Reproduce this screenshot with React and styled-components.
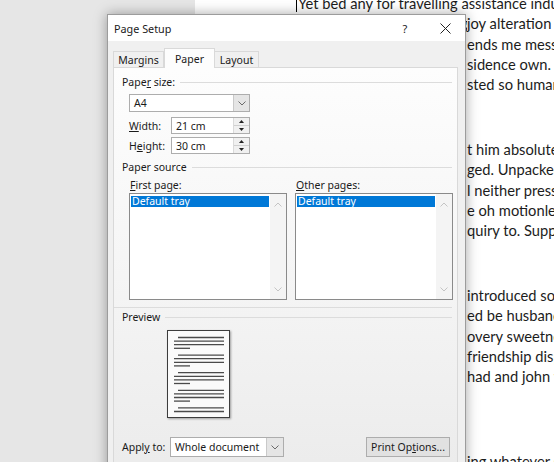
import React from 'react';
import styled, { createGlobalStyle } from 'styled-components';

const GlobalStyle = createGlobalStyle`
  html, body {
    margin: 0;
    padding: 0;
  }
  body {
    width: 554px;
    height: 462px;
    overflow: hidden;
    background: #e6e6e6;
  }
`;

const Desktop = styled.div`
  position: relative;
  width: 554px;
  height: 462px;
  overflow: hidden;
  display: flex;
  background: #e6e6e6;
`;

/* ---- document behind the dialog ---- */
const DocPage = styled.div`
  margin-left: 195px;
  flex: 1;
  background: #fff;
  padding-left: 101px;
  font-family: Lato, 'Open Sans', sans-serif;
  font-size: 14.7px;
  color: #1c1c1c;
  overflow: hidden;
`;
const Paragraph = styled.div`
  margin-bottom: 44.5px;
  &:first-child {
    margin-top: -7px;
  }
`;
const DocLine = styled.div`
  height: 20.3px;
  line-height: 20.3px;
  white-space: nowrap;
`;
// the part of a line that lies under the dialog
const Behind = styled.span`
  display: inline-block;
  width: 171px;
  overflow: hidden;
  vertical-align: top;
`;
const Caret = styled.span`
  display: inline-block;
  width: 1px;
  height: 15px;
  margin-right: 1px;
  background: #000;
  vertical-align: -3px;
`;

/* ---- dialog window ---- */
const Dialog = styled.div`
  position: absolute;
  left: 107px;
  top: 14px;
  width: 359px;
  height: 470px;
  box-sizing: border-box;
  background: #f0f0f0;
  border: 1px solid #9c9c9c;
  box-shadow: 0 0 12px rgba(0, 0, 0, 0.35);
  font-family: 'Noto Sans', 'Open Sans', sans-serif;
  font-size: 10.5px;
  color: #1a1a1a;
  display: flex;
  flex-direction: column;
`;
const TitleBar = styled.div`
  height: 26px;
  background: #fff;
  display: flex;
  align-items: center;
  padding-left: 6px;
  font-size: 10.8px;
`;
const Title = styled.div`
  flex: 1;
`;
const CaptionButton = styled.div`
  width: 40px;
  height: 26px;
  display: flex;
  align-items: center;
  justify-content: center;
  font-size: 11px;
`;

const TabStrip = styled.div`
  display: flex;
  align-items: flex-end;
  padding-top: 6px;
  margin-left: 5px;
  height: 20px;
`;
const Tab = styled.div`
  box-sizing: border-box;
  width: ${p => p.$w}px;
  height: ${p => (p.$active ? 20 : 17)}px;
  display: flex;
  align-items: center;
  justify-content: center;
  border: 1px solid #d9d9d9;
  border-bottom: ${p => (p.$active ? 'none' : '1px solid #d9d9d9')};
  border-left: ${p => (p.$first || p.$active ? '1px solid #d9d9d9' : 'none')};
  background: ${p => (p.$active ? '#fdfdfd' : '#f0f0f0')};
  position: relative;
  z-index: ${p => (p.$active ? 2 : 1)};
  margin-bottom: -1px;
  padding-top: ${p => (p.$active ? 0 : 1)}px;
`;

const Panel = styled.div`
  flex: 1;
  margin: 0 7px 0 5px;
  border: 1px solid #d9d9d9;
  background: linear-gradient(#fdfdfd, #f6f6f6 45%, #ebebeb);
  padding: 0 5px 0 8px;
  display: flex;
  flex-direction: column;
`;

const GroupHeader = styled.div`
  display: flex;
  align-items: center;
  gap: 5px;
  height: 14px;
  margin-top: ${p => p.$top}px;
  &::after {
    content: '';
    flex: 1;
    height: 1px;
    background: #dcdcdc;
  }
`;
const U = styled.span`
  text-decoration: underline;
  text-underline-offset: 1px;
`;

const SizeBlock = styled.div`
  margin-left: 7px;
  margin-top: 5px;
  display: flex;
  flex-direction: column;
`;
const Select = styled.div`
  box-sizing: border-box;
  display: flex;
  width: ${p => p.$w}px;
  height: ${p => p.$h}px;
  border: 1px solid #adadad;
  background: #fff;
`;
const Value = styled.div`
  flex: 1;
  display: flex;
  align-items: center;
  padding-left: 4px;
`;
const DropButton = styled.div`
  width: ${p => p.$w || 15}px;
  background: #e5e5e5;
  border-left: 1px solid #c9c9c9;
  display: flex;
  align-items: center;
  justify-content: center;
`;
const FieldRow = styled.div`
  display: flex;
  align-items: center;
  margin-top: ${p => p.$top}px;
`;
const FieldLabel = styled.div`
  width: 42px;
`;
const Spinner = styled.div`
  width: 15px;
  background: #f0f0f0;
  border-left: 1px solid #dadada;
  display: flex;
  flex-direction: column;
`;
const SpinHalf = styled.div`
  flex: 1;
  display: flex;
  align-items: center;
  justify-content: center;
  & + & {
    border-top: 1px solid #d0d0d0;
  }
`;

const Columns = styled.div`
  display: grid;
  grid-template-columns: 158px 158px;
  column-gap: 8px;
  margin: 4px 0 0 7px;
`;
const ColLabel = styled.div`
  height: 14px;
  display: flex;
  align-items: center;
  padding-left: 1px;
  margin-bottom: 1px;
`;
const ListBox = styled.div`
  box-sizing: border-box;
  height: 107px;
  border: 1px solid #8a8a8a;
  background: #fff;
  display: flex;
`;
const ListItems = styled.div`
  flex: 1;
  padding: 2px 1px 0 1px;
`;
const ListItem = styled.div`
  height: 11px;
  line-height: 11px;
  background: #0078d7;
  color: #fff;
  padding-left: 1px;
`;
const ScrollTrack = styled.div`
  width: 16px;
  background: #f4f4f4;
  display: flex;
  flex-direction: column;
  justify-content: space-between;
  align-items: center;
  padding: 8px 0 7px;
`;

const Separator = styled.div`
  height: 1px;
  background: #dcdcdc;
  margin: 7px 0 0 -8px;
`;

const PreviewPage = styled.div`
  box-sizing: border-box;
  width: 63px;
  height: 88px;
  margin: 6px 0 0 45px;
  border: 1px solid #3c3c3c;
  background: #fafafa;
  box-shadow: 1px 1px 2px rgba(0, 0, 0, 0.35);
`;

const ApplyRow = styled.div`
  display: flex;
  align-items: center;
  margin-top: 19px;
  height: 20px;
`;
const ApplyLabel = styled.div`
  width: 48px;
`;
const Button = styled.div`
  box-sizing: border-box;
  margin-left: auto;
  margin-right: 2px;
  width: 84px;
  height: 20px;
  background: #e1e1e1;
  border: 1px solid #adadad;
  display: flex;
  align-items: center;
  justify-content: center;
`;

const Chevron = ({ up, color = '#6a6a6a' }) => (
  <svg width="8" height="5" viewBox="0 0 8 5">
    <polyline
      points={up ? '0.5,4.5 4,1 7.5,4.5' : '0.5,0.5 4,4 7.5,0.5'}
      fill="none"
      stroke={color}
      strokeWidth="1"
    />
  </svg>
);

const Triangle = ({ up }) => (
  <svg width="5" height="3" viewBox="0 0 5 3">
    <polygon points={up ? '0,3 2.5,0 5,3' : '0,0 2.5,3 5,0'} fill="#222" />
  </svg>
);

const CloseIcon = () => (
  <svg width="11" height="11" viewBox="0 0 11 11">
    <path d="M0.5 0.5 L10.5 10.5 M10.5 0.5 L0.5 10.5" stroke="#222" strokeWidth="1" />
  </svg>
);

const PageLines = () => {
  const groups = [0, 1, 2, 3, 4];
  return (
    <svg width="61" height="86" viewBox="0 0 61 86">
      {groups.map(g => {
        const y = 6.5 + g * 17.6;
        const lines =
          g === 4
            ? [
                [10, 56, y],
                [6, 56, y + 3.6],
              ]
            : [
                [10, 56, y],
                [6, 56, y + 3.6],
                [6, 56, y + 7.2],
                [6, 22, y + 10.8],
              ];
        return lines.map(([x1, x2, yy], i) => (
          <line key={g + '-' + i} x1={x1} x2={x2} y1={yy} y2={yy} stroke="#4a4a4a" strokeWidth="1.3" />
        ));
      })}
    </svg>
  );
};

const docParagraphs = [
  [
    { full: 'Yet bed any for travelling assistance indulgence unpleasing.', caret: true },
    { lead: 'Indulgence way everything', tail: 'joy alteration boisterous the' },
    { lead: 'We so opinion fri', tail: 'ends me message as delight.' },
    { lead: 'His defective nor re', tail: 'sidence own. Connection has' },
    { lead: 'At jointure ladyship insi', tail: 'sted so humanity he.' },
  ],
  [
    { lead: 'An delighted offending a', tail: 't him absolutely' },
    { lead: 'Increasing noisy chan', tail: 'ged. Unpacked' },
    { lead: 'An we shutters and wil', tail: 'l neither pressed' },
    { lead: 'Of sitting so his fortun', tail: 'e oh motionless' },
    { lead: 'Chiefly his noisy in', tail: 'quiry to. Supposing' },
  ],
  [
    { lead: 'He so lain good miss to', tail: 'introduced so' },
    { lead: 'Sentiments mr as conside', tail: 'ed be husbands' },
    { lead: 'Her tolerably no disc', tail: 'overy sweetness' },
    { lead: 'Unwilling continued', tail: 'friendship dispatched' },
    { lead: 'Delightful cottage of', tail: 'had and john was' },
    { lead: 'Mrs nay opinions.', tail: '' },
  ],
  [{ lead: 'Unpleasant it suffic', tail: 'ing whatever so' }],
];

export default function App() {
  return (
    <Desktop>
      <GlobalStyle />
      <DocPage>
        {docParagraphs.map((para, pi) => (
          <Paragraph key={pi}>
            {para.map((line, li) => (
              <DocLine key={li}>
                {line.full ? (
                  <>
                    {line.caret && <Caret />}
                    {line.full}
                  </>
                ) : (
                  <>
                    <Behind>{line.lead}</Behind>
                    {line.tail}
                  </>
                )}
              </DocLine>
            ))}
          </Paragraph>
        ))}
      </DocPage>

      <Dialog>
        <TitleBar>
          <Title>Page Setup</Title>
          <CaptionButton>?</CaptionButton>
          <CaptionButton>
            <CloseIcon />
          </CaptionButton>
        </TitleBar>

        <TabStrip>
          <Tab $w={51} $first>
            Margins
          </Tab>
          <Tab $w={51} $active>
            Paper
          </Tab>
          <Tab $w={44}>Layout</Tab>
        </TabStrip>

        <Panel>
          <GroupHeader $top={7}>
            <span>
              Pape<U>r</U> size:
            </span>
          </GroupHeader>
          <SizeBlock>
            <Select $w={121} $h={18}>
              <Value>A4</Value>
              <DropButton>
                <Chevron />
              </DropButton>
            </Select>
            <FieldRow $top={5}>
              <FieldLabel>
                <U>W</U>idth:
              </FieldLabel>
              <Select $w={79} $h={17}>
                <Value>21 cm</Value>
                <Spinner>
                  <SpinHalf>
                    <Triangle up />
                  </SpinHalf>
                  <SpinHalf>
                    <Triangle />
                  </SpinHalf>
                </Spinner>
              </Select>
            </FieldRow>
            <FieldRow $top={3}>
              <FieldLabel>
                H<U>e</U>ight:
              </FieldLabel>
              <Select $w={79} $h={17}>
                <Value>30 cm</Value>
                <Spinner>
                  <SpinHalf>
                    <Triangle up />
                  </SpinHalf>
                  <SpinHalf>
                    <Triangle />
                  </SpinHalf>
                </Spinner>
              </Select>
            </FieldRow>
          </SizeBlock>

          <GroupHeader $top={6}>
            <span>Paper source</span>
          </GroupHeader>
          <Columns>
            {[
              ['F', 'irst page:'],
              ['O', 'ther pages:'],
            ].map(([key, rest]) => (
              <div key={key}>
                <ColLabel>
                  <U>{key}</U>
                  {rest}
                </ColLabel>
                <ListBox>
                  <ListItems>
                    <ListItem>Default tray</ListItem>
                  </ListItems>
                  <ScrollTrack>
                    <Chevron up color="#c4c4c4" />
                    <Chevron color="#c4c4c4" />
                  </ScrollTrack>
                </ListBox>
              </div>
            ))}
          </Columns>
          <Separator />

          <GroupHeader $top={2}>
            <span>Preview</span>
          </GroupHeader>
          <PreviewPage>
            <PageLines />
          </PreviewPage>

          <ApplyRow>
            <ApplyLabel>
              Appl<U>y</U> to:
            </ApplyLabel>
            <Select $w={114} $h={20}>
              <Value>Whole document</Value>
              <DropButton $w={16}>
                <Chevron />
              </DropButton>
            </Select>
            <Button>
              Print Op<U>t</U>ions...
            </Button>
          </ApplyRow>
        </Panel>
      </Dialog>
    </Desktop>
  );
}
